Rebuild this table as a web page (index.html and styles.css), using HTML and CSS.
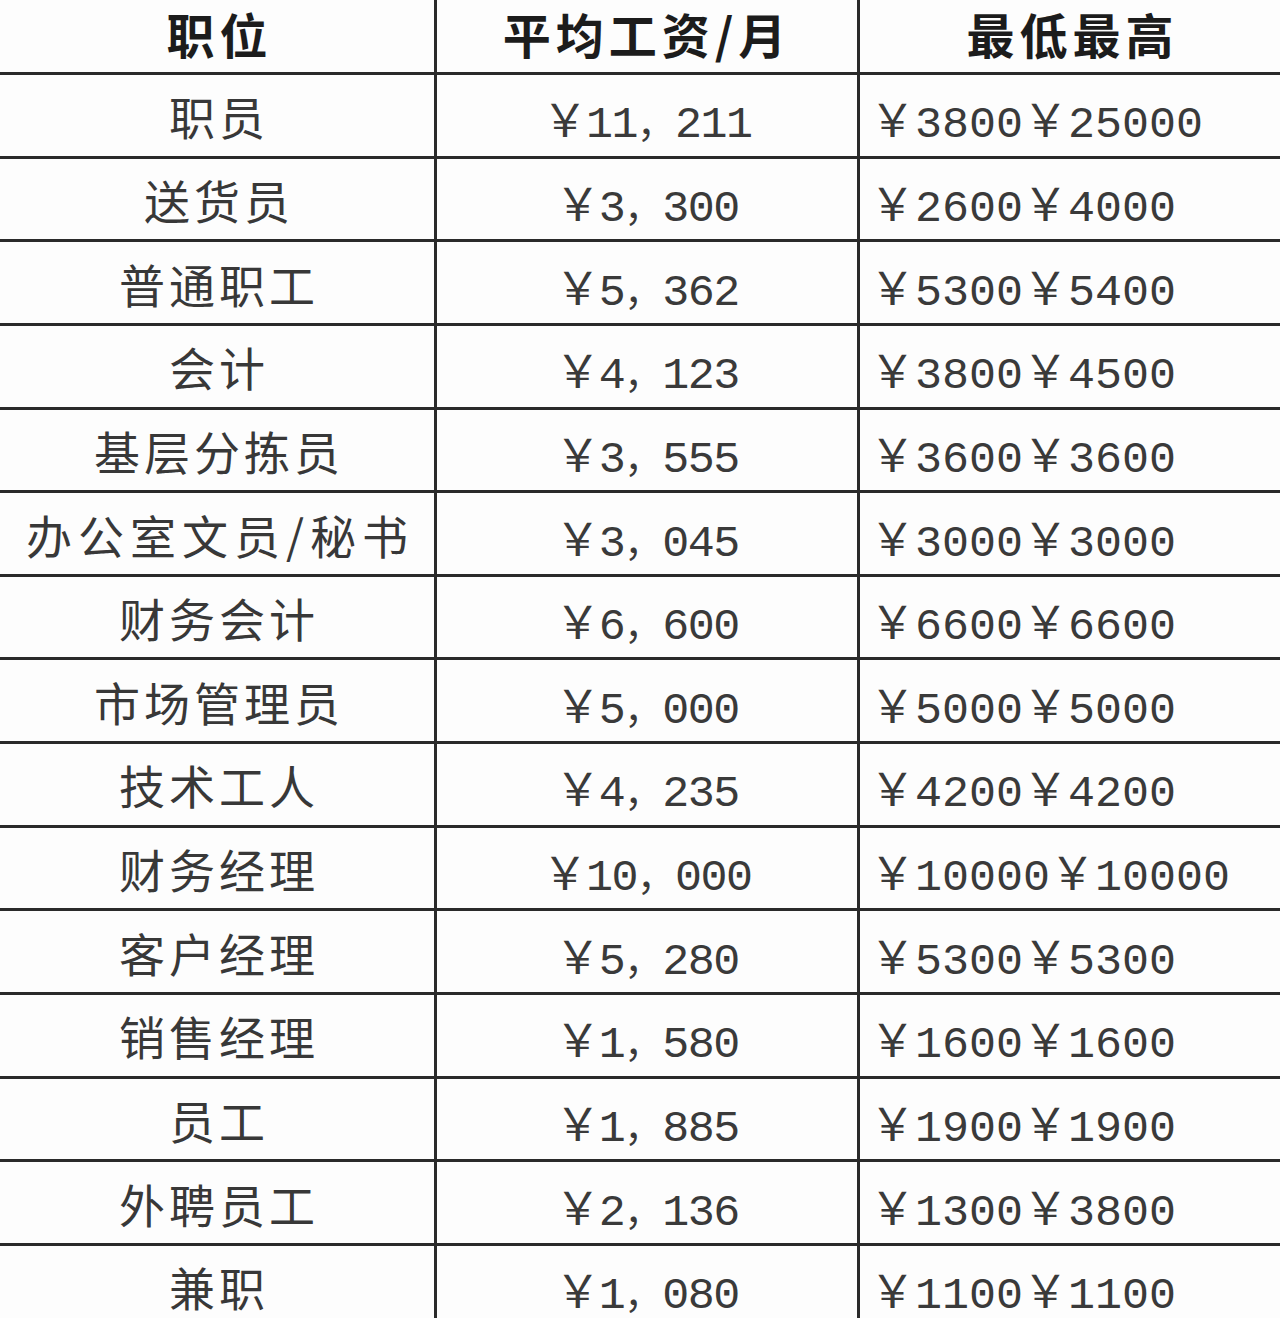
FILE: index.html
```html
<!DOCTYPE html>
<html lang="zh-CN">
<head>
<meta charset="utf-8">
<title>职位工资表</title>
<link rel="stylesheet" href="styles.css">
</head>
<body>
<div class="sheet">
  <div class="row head">
    <div class="c name">职位</div>
    <div class="c avg">平均工资/月</div>
    <div class="c range">最低最高</div>
  </div>
  <div class="row"><div class="c name">职员</div><div class="c avg num"><span>￥11<span class="cm">，</span>211</span></div><div class="c range num">￥3800￥25000</div></div>
  <div class="row"><div class="c name">送货员</div><div class="c avg num"><span>￥3<span class="cm">，</span>300</span></div><div class="c range num">￥2600￥4000</div></div>
  <div class="row"><div class="c name">普通职工</div><div class="c avg num"><span>￥5<span class="cm">，</span>362</span></div><div class="c range num">￥5300￥5400</div></div>
  <div class="row"><div class="c name">会计</div><div class="c avg num"><span>￥4<span class="cm">，</span>123</span></div><div class="c range num">￥3800￥4500</div></div>
  <div class="row"><div class="c name">基层分拣员</div><div class="c avg num"><span>￥3<span class="cm">，</span>555</span></div><div class="c range num">￥3600￥3600</div></div>
  <div class="row"><div class="c name wide">办公室文员/秘书</div><div class="c avg num"><span>￥3<span class="cm">，</span>045</span></div><div class="c range num">￥3000￥3000</div></div>
  <div class="row"><div class="c name">财务会计</div><div class="c avg num"><span>￥6<span class="cm">，</span>600</span></div><div class="c range num">￥6600￥6600</div></div>
  <div class="row"><div class="c name">市场管理员</div><div class="c avg num"><span>￥5<span class="cm">，</span>000</span></div><div class="c range num">￥5000￥5000</div></div>
  <div class="row"><div class="c name">技术工人</div><div class="c avg num"><span>￥4<span class="cm">，</span>235</span></div><div class="c range num">￥4200￥4200</div></div>
  <div class="row"><div class="c name">财务经理</div><div class="c avg num"><span>￥10<span class="cm">，</span>000</span></div><div class="c range num">￥10000￥10000</div></div>
  <div class="row"><div class="c name">客户经理</div><div class="c avg num"><span>￥5<span class="cm">，</span>280</span></div><div class="c range num">￥5300￥5300</div></div>
  <div class="row"><div class="c name">销售经理</div><div class="c avg num"><span>￥1<span class="cm">，</span>580</span></div><div class="c range num">￥1600￥1600</div></div>
  <div class="row"><div class="c name">员工</div><div class="c avg num"><span>￥1<span class="cm">，</span>885</span></div><div class="c range num">￥1900￥1900</div></div>
  <div class="row"><div class="c name">外聘员工</div><div class="c avg num"><span>￥2<span class="cm">，</span>136</span></div><div class="c range num">￥1300￥3800</div></div>
  <div class="row"><div class="c name">兼职</div><div class="c avg num"><span>￥1<span class="cm">，</span>080</span></div><div class="c range num">￥1100￥1100</div></div>
</div>
</body>
</html>
```

FILE: styles.css
```css
html, body {
  margin: 0;
  padding: 0;
  background: #fdfdfd;
}
body {
  width: 1280px;
  height: 1318px;
  overflow: hidden;
}
.sheet {
  display: grid;
  grid-template-columns: 437px 423px 420px;
  grid-template-rows: 72px;
  grid-auto-rows: 83.65px;
}
.row {
  display: contents;
}
.c {
  box-sizing: border-box;
  display: flex;
  align-items: center;
  border-top: 3px solid #2a2a2a;
  font-family: "Noto Sans CJK SC", sans-serif;
  font-size: 46px;
  color: #383838;
  white-space: nowrap;
}
.name, .avg {
  border-right: 3px solid #2a2a2a;
}
.name {
  justify-content: center;
  letter-spacing: 4px;
  padding-left: 4px;
}
.name.wide {
  letter-spacing: 6px;
  padding-left: 6px;
}
.avg {
  justify-content: center;
}
.range {
  justify-content: flex-start;
  padding-left: 10px;
}
.num {
  font-family: "Liberation Mono", "Noto Sans CJK SC", monospace;
  font-size: 45px;
  letter-spacing: -1.5px;
  color: #3a3a3a;
  padding-top: 6px;
}
.range.num {
  letter-spacing: 0;
}
.cm {
  font-family: "Noto Sans CJK SC", sans-serif;
  font-size: 38px;
  letter-spacing: 0;
}
.head .c {
  border-top: none;
  font-family: "Noto Sans CJK SC", sans-serif;
  font-weight: 700;
  font-size: 48px;
  letter-spacing: 5px;
  color: #1c1c1c;
  padding-bottom: 6px;
  justify-content: center;
}
.head .range {
  padding-left: 5px;
}
.head .name {
  padding-left: 5px;
}
```
